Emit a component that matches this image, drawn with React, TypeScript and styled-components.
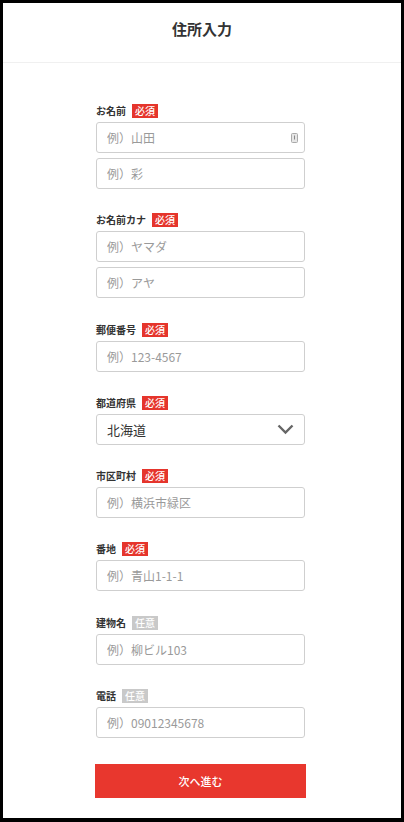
import React from 'react';
import styled, { createGlobalStyle } from 'styled-components';

const GlobalStyle = createGlobalStyle`
  html, body {
    margin: 0;
    padding: 0;
    background: #000;
  }
  body {
    font-family: "Noto Sans CJK JP", "Noto Sans", sans-serif;
    color: #333;
  }
  * {
    box-sizing: border-box;
  }
`;

const Frame = styled.div`
  margin: 3px 3px 0 3px;
  width: 398px;
  height: 815px;
  background: #fff;
  display: flex;
  flex-direction: column;
`;

const Header = styled.header`
  height: 60px;
  padding-top: 15px;
  border-bottom: 1px solid #f0f0f0;
  display: flex;
  justify-content: center;
  align-items: flex-start;
`;

const Title = styled.h1`
  margin: 0;
  font-size: 15px;
  line-height: 22px;
  font-weight: 700;
  color: #333;
`;

const Form = styled.form`
  padding: 41px 0 0 93px;
  display: flex;
  flex-direction: column;
  gap: 24.3px;
`;

const Field = styled.div`
  width: 209px;
  display: flex;
  flex-direction: column;
  gap: 4px;
`;

const LabelRow = styled.div`
  height: 14px;
  display: flex;
  align-items: center;
  gap: 6px;
`;

const Label = styled.label`
  font-size: 10px;
  font-weight: 700;
  color: #333;
  line-height: 14px;
`;

const Badge = styled.span<{ $required?: boolean }>`
  height: 14px;
  padding: 0 3px;
  font-size: 10px;
  font-weight: 500;
  line-height: 14px;
  color: #fff;
  background: ${(p) => (p.$required ? '#e5352c' : '#c9c9c9')};
`;

const Stack = styled.div`
  display: flex;
  flex-direction: column;
  gap: 5px;
`;

const InputBox = styled.div`
  position: relative;
  height: 31px;
  border: 1px solid #cfcfcf;
  border-radius: 3px;
  background: #fff;
  display: flex;
  align-items: center;
  padding: 0 10px;
`;

const Input = styled.input`
  flex: 1;
  width: 100%;
  border: none;
  outline: none;
  background: transparent;
  padding: 0;
  font-family: inherit;
  font-size: 12px;
  color: #333;
  &::placeholder {
    color: #9a9a9a;
  }
`;

const KeyIcon = styled.svg`
  position: absolute;
  right: 6px;
  top: 10px;
`;

const SelectText = styled.span`
  flex: 1;
  font-size: 13px;
  color: #333;
`;

const Button = styled.button`
  margin: 2px 0 0 -1px;
  width: 211px;
  height: 34px;
  border: none;
  background: #e8372e;
  color: #fff;
  font-family: inherit;
  font-size: 11px;
  font-weight: 500;
  cursor: pointer;
`;

type FieldDef = {
  label: string;
  required: boolean;
  placeholders: string[];
};

const fields: FieldDef[] = [
  { label: 'お名前', required: true, placeholders: ['例）山田', '例）彩'] },
  { label: 'お名前カナ', required: true, placeholders: ['例）ヤマダ', '例）アヤ'] },
  { label: '郵便番号', required: true, placeholders: ['例）123-4567'] },
  { label: '都道府県', required: true, placeholders: [] },
  { label: '市区町村', required: true, placeholders: ['例）横浜市緑区'] },
  { label: '番地', required: true, placeholders: ['例）青山1-1-1'] },
  { label: '建物名', required: false, placeholders: ['例）柳ビル103'] },
  { label: '電話', required: false, placeholders: ['例）09012345678'] },
];

const App: React.FC = () => {
  return (
    <>
      <GlobalStyle />
      <Frame>
        <Header>
          <Title>住所入力</Title>
        </Header>
        <Form onSubmit={(e) => e.preventDefault()}>
          {fields.map((f, fi) => (
            <Field key={f.label}>
              <LabelRow>
                <Label>{f.label}</Label>
                <Badge $required={f.required}>{f.required ? '必須' : '任意'}</Badge>
              </LabelRow>
              <Stack>
                {f.placeholders.length === 0 ? (
                  <InputBox>
                    <SelectText>北海道</SelectText>
                    <svg width="17" height="11" viewBox="0 0 17 11">
                      <path d="M1.5 1.5 L8.5 8.5 L15.5 1.5" fill="none" stroke="#666" strokeWidth="2.4" />
                    </svg>
                  </InputBox>
                ) : (
                  f.placeholders.map((ph, i) => (
                    <InputBox key={ph}>
                      <Input placeholder={ph} />
                      {fi === 0 && i === 0 && (
                        <KeyIcon width="7" height="10" viewBox="0 0 7 10">
                          <rect x="0.5" y="0.5" width="6" height="9" rx="1" fill="#e6e6e6" stroke="#aaa" />
                          <path d="M3.5 2.5 V6.5" stroke="#888" strokeWidth="1" />
                        </KeyIcon>
                      )}
                    </InputBox>
                  ))
                )}
              </Stack>
            </Field>
          ))}
          <Button type="button">次へ進む</Button>
        </Form>
      </Frame>
    </>
  );
};

export default App;
